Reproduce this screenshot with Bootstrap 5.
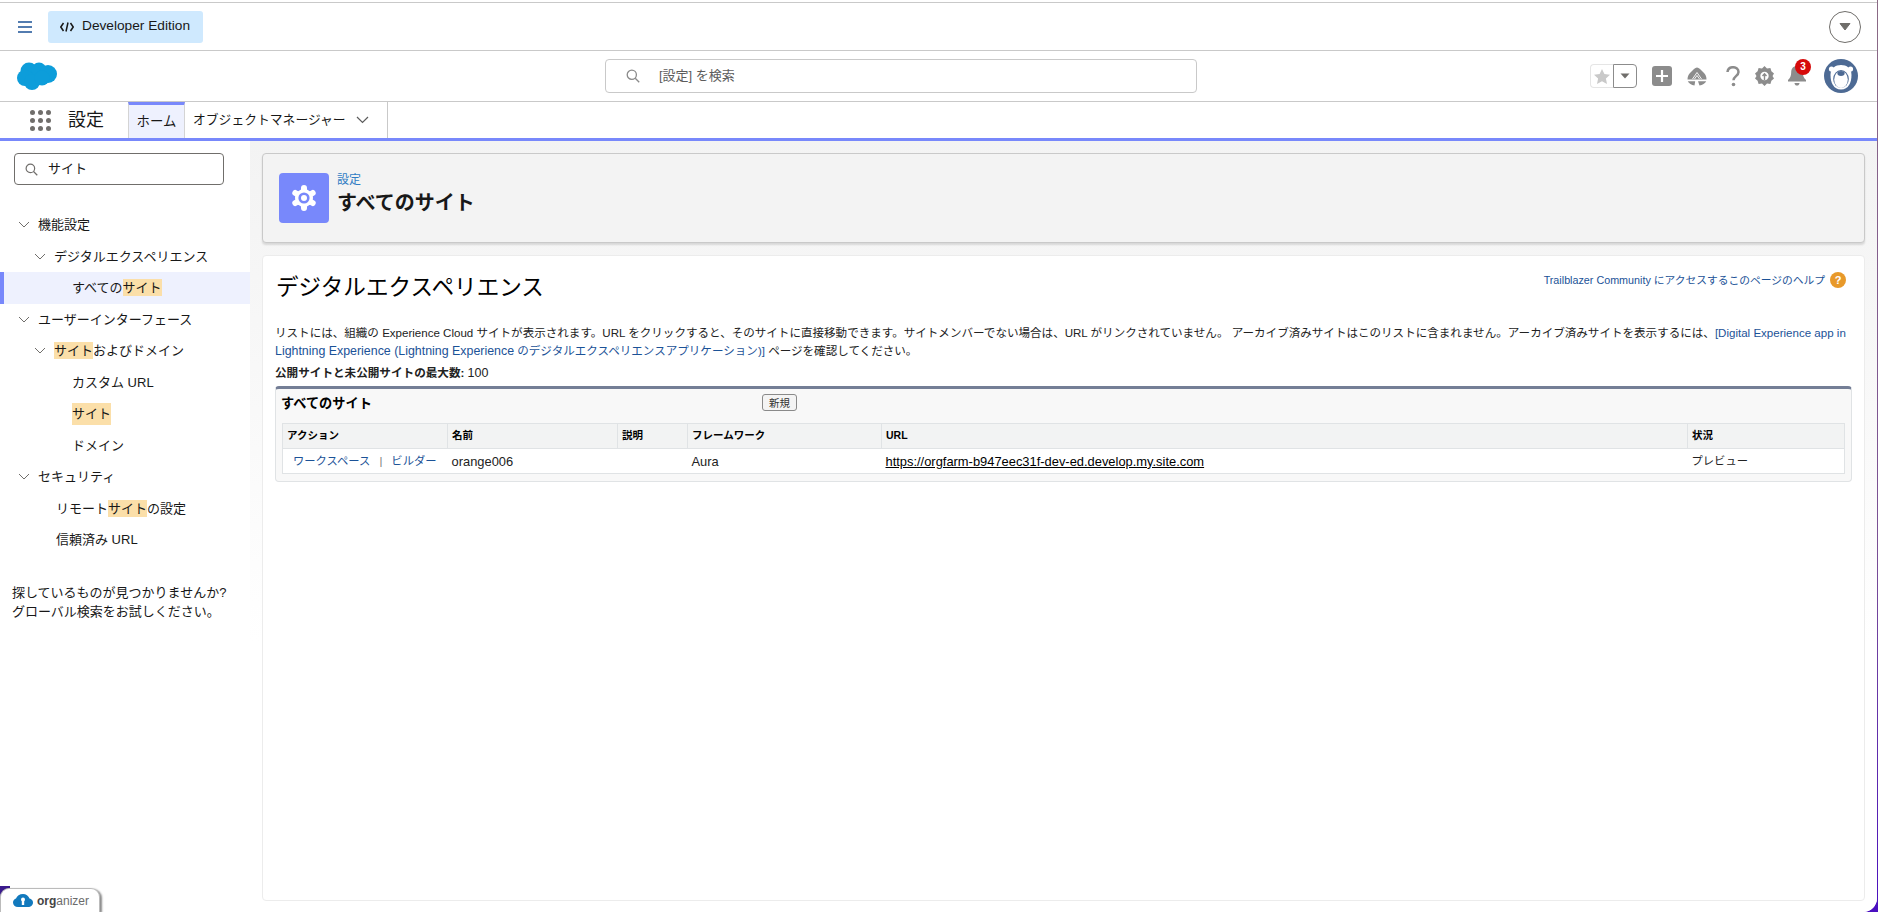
<!DOCTYPE html>
<html lang="ja">
<head>
<meta charset="UTF-8">
<meta name="viewport" content="width=device-width, initial-scale=1.0">
<title>すべてのサイト | 設定</title>
<link href="https://cdn.jsdelivr.net/npm/bootstrap@5.3.0/dist/css/bootstrap.min.css" rel="stylesheet">
<style>
html, body { height: 100%; overflow: hidden; }
body { font-family: "Liberation Sans", "Noto Sans CJK JP", sans-serif; font-size: 13px; color: #181818; background: linear-gradient(#8b6a85, #7a4f95 60%, #4a0fc0); }
a { color: #1b5297; text-decoration: none; }
.app-shell { height: 912px; width: 1877px; background: #fff; border-radius: 0 0 14px 0; overflow: hidden; }
.org-bar { height: 49px; margin-top: 2px; border-top: 1px solid #c9c9c9; border-bottom: 1px solid #c9c9c9; padding: 0 16px 0 18px; flex: none; }
.ham { width: 14px; margin-right: 16px; }
.dev-badge { background: #cfe9fe; border-radius: 3px; width: 155px; height: 32px; font-size: 13.7px; padding-left: 12px; gap: 8px; color: #181818; }
.top-circle { width: 32px; height: 32px; border: 1px solid #706e6b; border-radius: 50%; }
.global-bar { height: 51px; border-bottom: 1px solid #c9c9c9; padding: 0 19px 0 17px; flex: none; position: relative; }
.global-search { position: absolute; left: 605px; top: 8px; width: 592px; height: 34px; border: 1px solid #c9c9c9; border-radius: 4px; padding-left: 20px; color: #5c5c5c; gap: 19px; font-size: 13px; }
.star-group { width: 47px; height: 24px; margin-right: 15px; }
.star-left { width: 23px; border: 1px solid #e5e5e5; border-right: 0; border-radius: 4px 0 0 4px; }
.star-right { width: 24px; border: 1px solid #8c8c8c; border-radius: 0 4px 4px 0; }
.head-ico { margin-right: 15px; }
.bell-wrap { position: relative; }
.notif { position: absolute; left: 7px; top: -7px; width: 16px; height: 16px; border-radius: 50%; background: #d60a0a; color: #fff; font-size: 10px; font-weight: 700; line-height: 16px; text-align: center; }
.tab-bar { height: 36px; flex: none; padding-left: 30px; }
.launcher { width: 21px; margin-right: 17px; }
.app-name { font-size: 18px; width: 60px; color: #181818; }
.tab-home { width: 57px; background: #eef1fe; border-top: 3px solid #7888fb; border-left: 1px solid #d4d4d4; border-right: 1px solid #d4d4d4; font-size: 13.4px; padding-top: 1px; }
.tab-obj { width: 203px; border-right: 1px solid #c9c9c9; font-size: 12.8px; padding-left: 8px; gap: 10px; }
.blue-rule { height: 3px; background: #7888fb; flex: none; }
.body-row { flex: 1; min-height: 0; background: linear-gradient(#f3f3f3, #f9f9f9 35%, #fff 65%); }
.side { width: 250px; background: #fff; flex: none; }
.side-search { margin: 12px 0 0 14px; width: 210px; height: 32px; border: 1px solid #706e6b; border-radius: 4px; padding-left: 10px; gap: 10px; font-size: 13px; }
.tree { margin-top: 24px; }
.tree-row { height: 31.5px; gap: 8px; white-space: nowrap; }
.lv1 { padding-left: 18px; }
.lv2 { padding-left: 34px; }
.lv3 { padding-left: 72px; }
.lv4 { padding-left: 56px; }
.lv5 { padding-left: 56px; }
.tree-sel { background: #eef1fe; border-left: 4px solid #7888fb; padding-left: 68px; }
.hit { background: #fbdfa9; padding: 1px 0; }
.side-help { margin: 27px 0 0 12px; line-height: 19px; font-size: 13px; }
.main-col { flex: 1; min-width: 0; padding: 12px 12px 11px 12px; }
.page-head { height: 90px; background: #f3f3f3; border: 1px solid #c9c9c9; border-radius: 4px; box-shadow: 0 2px 2px rgba(0,0,0,.12); padding-left: 16px; flex: none; }
.head-icon { width: 50px; height: 50px; background: #7888fb; border-radius: 4px; margin-right: 8px; }
.head-text { margin-top: -4px; }
.crumb { font-size: 12px; color: #2f7cc4; line-height: 14px; }
.page-title { font-size: 20px; font-weight: 700; line-height: 32px; margin: 0; }
.content-card { flex: 1; margin-top: 12px; background: #fff; border: 1px solid #ececec; border-radius: 4px; padding: 0 12px; position: relative; min-height: 0; }
.big-title { font-size: 22.6px; font-weight: 400; margin: 16px 0 0 1px; line-height: 32px; color: #000; }
.help-link { position: absolute; top: 16px; right: 18px; font-size: 10.75px; gap: 5px; line-height: 16px; color: #1b5297; }
.help-dot { width: 16px; height: 16px; border-radius: 50%; background: #e8992a; color: #fff; font-weight: 700; font-size: 11px; text-align: center; line-height: 16px; }
.intro { font-size: 11.55px; line-height: 18px; margin: 20px 0 0; color: #222; white-space: nowrap; }
.wide-latin { font-size: 12.4px; }
.limit { font-size: 11.6px; font-weight: 700; margin: 4px 0 0; line-height: 18px; color: #222; }
.limit .num { font-size: 12.5px; font-weight: 400; }
.block { margin-top: 4px; background: #f8f8f8; border: 1px solid #e0e3e5; border-top: 3px solid #747e96; border-radius: 4px; padding: 0 6px 7px; height: 96px; }
.block-head { height: 34px; position: relative; }
.block-title { font-size: 13.2px; font-weight: 700; color: #000; line-height: 28px; margin-left: -1px; padding-top: 1px; }
.new-btn { position: absolute; left: 480px; top: 5px; width: 35px; height: 17px; padding: 0; font-size: 10.5px; line-height: 14px; color: #333; background: #f4f4f4; border: 1px solid #8a8a8a; border-radius: 3px; }
.sites { width: 100%; table-layout: fixed; border-collapse: collapse; background: #fff; font-size: 12.9px; border: 1px solid #e0e3e5; margin: 0; }
.sites th { background: #f2f3f3; height: 25px; font-size: 10.5px; font-weight: 700; color: #000; padding: 0 4px; border-right: 1px solid #e0e3e5; border-bottom: 1px solid #e0e3e5; }
.sites th:last-child { border-right: 0; }
.sites td { height: 25px; padding: 1px 4px 0; color: #222; white-space: nowrap; overflow: hidden; }
.sites td a { color: #1b5297; }
.sites td .url-link { color: #000; text-decoration: underline; }
.jp-cell { font-size: 11.3px; }
.sep { color: #777; margin: 0 9px; }
.action-cell { padding-left: 10px !important; }
.org-tab { position: absolute; left: 0; bottom: 0; width: 100px; height: 24px; background: #fff; border: 1px solid #bbb; border-bottom: 0; border-radius: 9px 9px 0 0; box-shadow: 2px 1px 2px rgba(0,0,0,.45); padding-left: 12px; gap: 4px; font-size: 12px; color: #6b6b6b; }
.org-corner { position: absolute; left: 0; bottom: 0; width: 10px; height: 26px; background: #3a1a8c; }
.org-tab b { color: #444; }
</style>
</head>
<body>
<div class="app-shell d-flex flex-column">

    <!-- org banner -->
    <div class="org-bar d-flex align-items-center">
        <svg class="ham" viewBox="0 0 14 12" height="12"><path d="M0 1h14M0 6h14M0 11h14" stroke="#1b5297" stroke-width="1.6"/></svg>
        <div class="dev-badge d-flex align-items-center">
            <svg width="14" height="10" viewBox="0 0 14 10"><path d="M3.500 1 .8 5l2.700 4M10.500 1l2.700 4-2.700 4M8 .5 6 9.500" fill="none" stroke="#181818" stroke-width="1.500"/></svg>
            <span>Developer Edition</span>
        </div>
        <div class="top-circle ms-auto d-flex align-items-center justify-content-center">
            <svg width="14" height="8" viewBox="0 0 14 8"><path d="M2 .5h10L7 7z" fill="#706e6b" stroke="#706e6b" stroke-linejoin="round"/></svg>
        </div>
    </div>

    <!-- global header -->
    <div class="global-bar d-flex align-items-center">
        <svg width="40" height="28" viewBox="0 0 40 28"><g fill="#0d9dda"><circle cx="12" cy="9" r="8.500"/><circle cx="22" cy="8" r="7.500"/><circle cx="31" cy="12" r="9"/><circle cx="8" cy="16" r="8"/><circle cx="15" cy="20" r="8"/><circle cx="25" cy="16" r="7.500"/></g></svg>
        <div class="global-search d-flex align-items-center">
            <svg width="14" height="14" viewBox="0 0 14 14"><circle cx="5.800" cy="5.800" r="4.600" fill="none" stroke="#8a8a8a" stroke-width="1.300"/><path d="m9.200 9.200 4 4" stroke="#8a8a8a" stroke-width="1.300"/></svg>
            <span>[設定] を検索</span>
        </div>
        <div class="ms-auto d-flex align-items-center">
            <div class="star-group d-flex">
                <div class="star-left d-flex align-items-center justify-content-center">
                    <svg width="16" height="15" viewBox="0 0 16 15"><path d="m8 0 2.400 5 5.600.7-4.100 3.800 1.100 5.500L8 12.300 3 15l1.100-5.500L0 5.700 5.600 5z" fill="#c9c9c9"/></svg>
                </div>
                <div class="star-right d-flex align-items-center justify-content-center">
                    <svg width="10" height="6" viewBox="0 0 10 6"><path d="M.5.500h9L5 5.500z" fill="#706e6b"/></svg>
                </div>
            </div>
            <svg class="head-ico" width="20" height="20" viewBox="0 0 20 20"><rect width="20" height="20" rx="3" fill="#8c8c8c"/><path d="M10 4v12M4 10h12" stroke="#fff" stroke-width="2.200"/></svg>
            <svg class="head-ico" width="20" height="19" viewBox="0 0 20 19"><path d="M10 .5c1 0 2 .5 3 1.500l4 4c1.500 1.500 2.500 3.500 2.500 6.500H.5c0-3 1-5 2.500-6.500l4-4c1-1 2-1.500 3-1.500z" fill="#8c8c8c"/><path d="M.8 14.300h7.400l-.7 4.200C4.500 18 1.800 16.500.8 14.300zM11 14.300h8.200c-1 2.200-3.700 3.700-6.700 4.200z" fill="#8c8c8c"/><path d="M5.500 12 10 5.500l4.500 6.500M7.500 12 10 8.500l2.500 3.500" fill="none" stroke="#fff" stroke-width=".9"/></svg>
            <svg class="ms-1" width="14" height="21" viewBox="0 0 14 21"><path d="M1.500 6C1.800 3 4 1.200 7 1.200s5.500 1.900 5.500 4.800c0 4-5 4.200-5 8.200" fill="none" stroke="#8c8c8c" stroke-width="2.500"/><circle cx="7.500" cy="18.500" r="1.800" fill="#8c8c8c"/></svg>
            <svg style="margin-left:15px" width="19" height="20" viewBox="0 0 19 20"><path d="M9.500 0 12 2.500l3.400-.6 1 3.300L19 7.500 17.500 10l1.500 2.500-2.600 2.300-1 3.300-3.400-.6L9.500 20 7 17.500l-3.400.6-1-3.300L0 12.500 1.500 10 0 7.500l2.600-2.300 1-3.300L7 2.500z" fill="#8c8c8c"/><circle cx="9.500" cy="10" r="4.200" fill="#fff"/><path d="M9.500 14V8M7.500 10l2-2.300 2 2.300" fill="none" stroke="#8c8c8c" stroke-width="1.400"/></svg>
            <div class="bell-wrap" style="margin-left:14px">
                <svg class="d-block" width="18" height="20" viewBox="0 0 18 20"><path d="M9 0c3.800 0 5.800 2.700 5.800 6.300 0 4 1 5.500 3.200 7.700v1.500H0V14c2.200-2.200 3.200-3.700 3.200-7.700C3.200 2.700 5.200 0 9 0z" fill="#8c8c8c"/><path d="M6.500 17h5c0 1.500-1 2.600-2.500 2.600S6.500 18.500 6.500 17z" fill="#8c8c8c"/></svg>
                <span class="notif">3</span>
            </div>
            <svg style="margin-left:18px" width="34" height="34" viewBox="0 0 34 34"><circle cx="17" cy="17" r="17" fill="#4d6a94"/><circle cx="7.500" cy="10" r="2.600" fill="#fff"/><circle cx="26.500" cy="10" r="2.600" fill="#fff"/><path d="M6.500 16C6.500 9 11.500 6 17 6s10.500 3 10.500 10c0 7.500-3 14.500-10.500 14.500S6.500 23.500 6.500 16z" fill="#fff"/><ellipse cx="17" cy="20" rx="7.800" ry="9" fill="#4d6a94"/><ellipse cx="17" cy="20.500" rx="6.800" ry="8.600" fill="#fff"/><ellipse cx="17" cy="14.500" rx="3.600" ry="2.400" fill="#4d6a94"/></svg>
        </div>
    </div>

    <!-- app tabs -->
    <div class="tab-bar d-flex align-items-stretch">
        <div class="d-flex align-items-center">
            <svg class="launcher" viewBox="0 0 21 21" height="21">
                <g fill="#706e6b">
                    <circle cx="2.500" cy="2.500" r="2.500"/><circle cx="10.500" cy="2.500" r="2.500"/><circle cx="18.500" cy="2.500" r="2.500"/>
                    <circle cx="2.500" cy="10.500" r="2.500"/><circle cx="10.500" cy="10.500" r="2.500"/><circle cx="18.500" cy="10.500" r="2.500"/>
                    <circle cx="2.500" cy="18.500" r="2.500"/><circle cx="10.500" cy="18.500" r="2.500"/><circle cx="18.500" cy="18.500" r="2.500"/>
                </g>
            </svg>
            <span class="app-name">設定</span>
        </div>
        <div class="tab-home d-flex align-items-center justify-content-center">ホーム</div>
        <div class="tab-obj d-flex align-items-center">
            <span>オブジェクトマネージャー</span>
            <svg width="13" height="8" viewBox="0 0 13 8"><path d="m1 1 5.500 5.500L12 1" fill="none" stroke="#5c5c5c" stroke-width="1.200"/></svg>
        </div>
    </div>
    <div class="blue-rule"></div>

    <div class="body-row d-flex">
        <!-- setup tree -->
        <aside class="side">
            <div class="side-search d-flex align-items-center">
                <svg width="13" height="13" viewBox="0 0 14 14"><circle cx="5.800" cy="5.800" r="4.600" fill="none" stroke="#706e6b" stroke-width="1.300"/><path d="m9.200 9.200 4 4" stroke="#706e6b" stroke-width="1.300"/></svg>
                <span>サイト</span>
            </div>
            <div class="tree">
                <div class="tree-row lv1 d-flex align-items-center"><svg width="12" height="7" viewBox="0 0 12 7"><path d="m1 1 5 5 5-5" fill="none" stroke="#706e6b"/></svg><span>機能設定</span></div>
                <div class="tree-row lv2 d-flex align-items-center"><svg width="12" height="7" viewBox="0 0 12 7"><path d="m1 1 5 5 5-5" fill="none" stroke="#706e6b"/></svg><span>デジタルエクスペリエンス</span></div>
                <div class="tree-row tree-sel d-flex align-items-center"><span>すべての<span class="hit">サイト</span></span></div>
                <div class="tree-row lv1 d-flex align-items-center"><svg width="12" height="7" viewBox="0 0 12 7"><path d="m1 1 5 5 5-5" fill="none" stroke="#706e6b"/></svg><span>ユーザーインターフェース</span></div>
                <div class="tree-row lv2 d-flex align-items-center"><svg width="12" height="7" viewBox="0 0 12 7"><path d="m1 1 5 5 5-5" fill="none" stroke="#706e6b"/></svg><span><span class="hit">サイト</span>およびドメイン</span></div>
                <div class="tree-row lv3 d-flex align-items-center"><span>カスタム URL</span></div>
                <div class="tree-row lv3 d-flex align-items-center"><span class="hit">サイト</span></div>
                <div class="tree-row lv3 d-flex align-items-center"><span>ドメイン</span></div>
                <div class="tree-row lv1 d-flex align-items-center"><svg width="12" height="7" viewBox="0 0 12 7"><path d="m1 1 5 5 5-5" fill="none" stroke="#706e6b"/></svg><span>セキュリティ</span></div>
                <div class="tree-row lv4 d-flex align-items-center"><span>リモート<span class="hit">サイト</span>の設定</span></div>
                <div class="tree-row lv5 d-flex align-items-center"><span>信頼済み URL</span></div>
            </div>
            <p class="side-help">探しているものが見つかりませんか?<br>グローバル検索をお試しください。</p>
        </aside>

        <main class="main-col d-flex flex-column">
            <div class="page-head d-flex align-items-center">
                <div class="head-icon d-flex align-items-center justify-content-center">
                    <svg width="28" height="28" viewBox="0 0 28 28"><g stroke="#fff" stroke-width="6" stroke-linecap="round"><path d="M14 4v20M5.300 9l17.400 10M5.300 19 22.700 9"/></g><circle cx="14" cy="14" r="9" fill="#fff"/><circle cx="14" cy="14" r="5.600" fill="#7888fb"/><circle cx="14" cy="14" r="3" fill="#fff"/></svg>
                </div>
                <div class="head-text">
                    <div class="crumb">設定</div>
                    <h1 class="page-title">すべてのサイト</h1>
                </div>
            </div>

            <div class="content-card">
                <a class="help-link d-flex align-items-center" href="#"><span>Trailblazer Community にアクセスするこのページのヘルプ</span><span class="help-dot">?</span></a>
                <h2 class="big-title">デジタルエクスペリエンス</h2>
                <p class="intro">リストには、組織の Experience Cloud サイトが表示されます。URL をクリックすると、そのサイトに直接移動できます。サイトメンバーでない場合は、URL がリンクされていません。 アーカイブ済みサイトはこのリストに含まれません。アーカイブ済みサイトを表示するには、<a href="#">[Digital Experience app in</a><br><a href="#"><span class="wide-latin">Lightning Experience (Lightning Experience</span> のデジタルエクスペリエンスアプリケーション)]</a> ページを確認してください。</p>
                <p class="limit">公開サイトと未公開サイトの最大数: <span class="num">100</span></p>
                <div class="block">
                    <div class="block-head">
                        <div class="block-title">すべてのサイト</div>
                        <button class="new-btn" type="button">新規</button>
                    </div>
                    <table class="sites">
                        <colgroup><col style="width:165px"><col style="width:170px"><col style="width:70px"><col style="width:194px"><col style="width:806px"><col></colgroup>
                        <thead><tr><th>アクション</th><th>名前</th><th>説明</th><th>フレームワーク</th><th>URL</th><th>状況</th></tr></thead>
                        <tbody><tr>
                            <td class="action-cell jp-cell"><a href="#">ワークスペース</a><span class="sep">|</span><a href="#">ビルダー</a></td>
                            <td>orange006</td><td></td><td>Aura</td>
                            <td><a class="url-link" href="#">https://orgfarm-b947eec31f-dev-ed.develop.my.site.com</a></td>
                            <td class="jp-cell">プレビュー</td>
                        </tr></tbody>
                    </table>
                </div>
            </div>
        </main>
    </div>
</div>

<!-- browser extension tab, sits over the page corner -->
<div class="org-corner"></div>
<div class="org-tab d-flex align-items-center">
    <svg width="20" height="14" viewBox="0 0 20 14"><path d="M5 13C2 13 0 11 0 8.500 0 6.500 1.500 5 3 4.500 4 2 6.500 0 10 0c3 0 5.500 1.800 6.500 4.500C18.500 5 20 6.500 20 8.500 20 11 18 13 15 13z" fill="#1279bd"/><circle cx="10" cy="5.500" r="2" fill="#fff"/><path d="M8.800 6h2.400v5H8.800z" fill="#fff"/></svg>
    <span><b>org</b>anizer</span>
</div>
<script src="https://cdn.jsdelivr.net/npm/bootstrap@5.3.0/dist/js/bootstrap.bundle.min.js"></script>
</body>
</html>
